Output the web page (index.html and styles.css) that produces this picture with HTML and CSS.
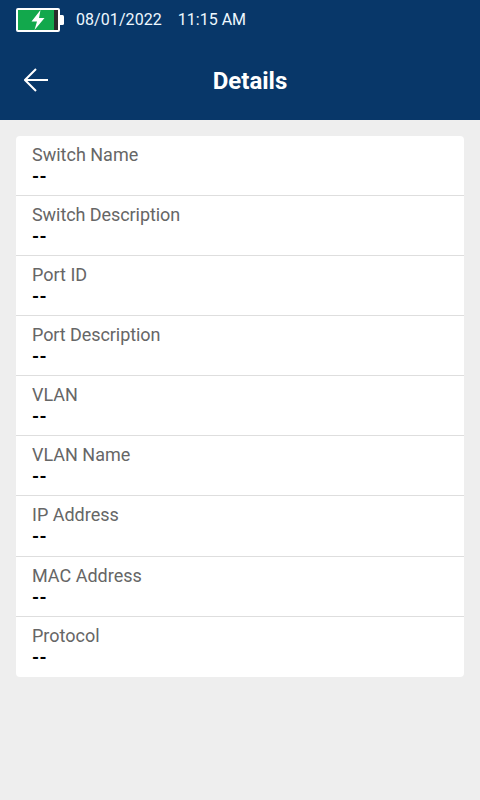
FILE: index.html
```html
<!DOCTYPE html>
<html lang="en">
<head>
<meta charset="utf-8">
<title>Details</title>
<link rel="stylesheet" href="styles.css">
</head>
<body>
<header class="header">
  <div class="status">
    <svg class="battery" width="48" height="24" viewBox="0 0 48 24">
      <rect x="1" y="1" width="42" height="22" rx="1" fill="#2b2b2b" stroke="#fff" stroke-width="2"/>
      <rect x="2" y="2" width="36" height="20" fill="#12a84c"/>
      <path d="M44 7h2.500q1.500 0 1.500 1.500v7q0 1.500-1.500 1.500H44z" fill="#fff"/>
      <path d="M24.500 2L15.500 13.500h5.500L18.500 22 28.500 10h-5.500z" fill="#fff"/>
    </svg>
    <span class="date">08/01/2022</span>
    <span class="time">11:15 AM</span>
  </div>
  <div class="titlebar">
    <svg class="back" width="24" height="24" viewBox="0 0 24 24"><path d="M24 12H1.500M12 1L1 12l11 11" fill="none" stroke="#fff" stroke-width="2"/></svg>
    <h1 class="title">Details</h1>
  </div>
</header>
<main class="content">
  <dl class="card">
    <div class="row"><dt>Switch Name</dt><dd>--</dd></div>
    <div class="row"><dt class="long">Switch Description</dt><dd>--</dd></div>
    <div class="row"><dt>Port ID</dt><dd>--</dd></div>
    <div class="row"><dt class="long">Port Description</dt><dd>--</dd></div>
    <div class="row"><dt>VLAN</dt><dd>--</dd></div>
    <div class="row"><dt>VLAN Name</dt><dd>--</dd></div>
    <div class="row"><dt>IP Address</dt><dd>--</dd></div>
    <div class="row"><dt>MAC Address</dt><dd>--</dd></div>
    <div class="row"><dt>Protocol</dt><dd>--</dd></div>
  </dl>
</main>
</body>
</html>
```
FILE: styles.css
```css
* { box-sizing: border-box; }
body { margin: 0; min-height: 800px; background: #eee; font-family: Roboto, sans-serif; }
.header { height: 120px; background: #083769; color: #fff; }
.status { display: flex; align-items: center; height: 40px; padding: 0 16px; font-size: 16px; color: #eef8ff; }
.date, .time { padding-bottom: 2px; }
.date { margin-left: 12px; letter-spacing: 0.07px; }
.time { margin-left: 16px; }
.titlebar { display: grid; grid-template-columns: 24px 1fr 24px; align-items: center; height: 80px; padding: 0 24px; }
.title { margin: 0; padding: 2px 0 0 20px; font-size: 24px; line-height: 28px; font-weight: 700; text-align: center; }
.content { padding: 16px; }
.card { margin: 0; background: #fff; border-radius: 4px; overflow: hidden; }
.row { height: 60.079px; padding: 8px 16px 0; border-bottom: 1px solid #dedede; }
.row:last-child { border-bottom: 0; }
dt { font-size: 18px; line-height: 22px; color: #666; }
.long { letter-spacing: -0.07px; }
dd { margin: 0; font-size: 18px; line-height: 22px; font-weight: 700; letter-spacing: 0.5px; color: #000; }
```
